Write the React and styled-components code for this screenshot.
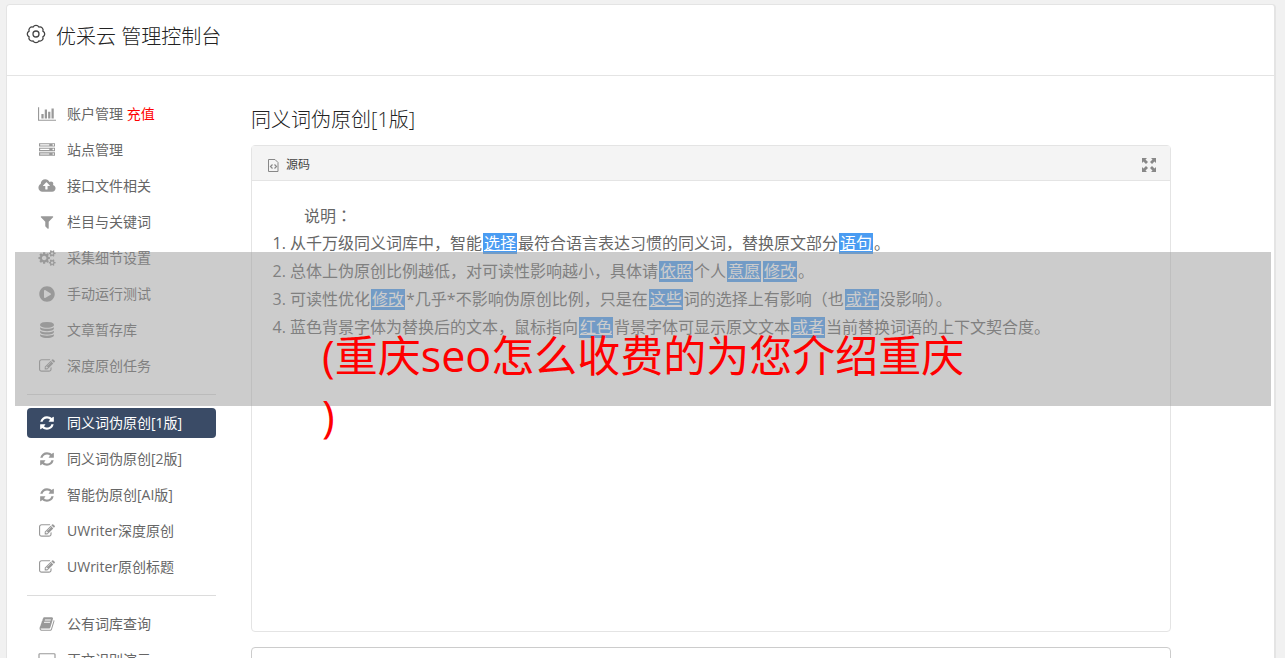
import React from "react";
import { FaPlayCircle } from "react-icons/fa";
import styled, { createGlobalStyle } from "styled-components";

const paths = {
  chart: {
    box: "0 0 2048 1792",
    d: "M640 896v512h-256v-512h256zm384-512v1024h-256v-1024h256zm1024 1152v128h-2048v-1536h128v1408h1920zm-640-896v768h-256v-768h256zm384-384v1152h-256v-1152h256z",
  },
  server: {
    box: "0 0 1792 1792",
    d: "M128 1408h1024v-128h-1024v128zm0-512h1024v-128h-1024v128zm1568 448q0-40-28-68t-68-28-68 28-28 68 28 68 68 28 68-28 28-68zm-1568-960h1024v-128h-1024v128zm1568 448q0-40-28-68t-68-28-68 28-28 68 28 68 68 28 68-28 28-68zm0-512q0-40-28-68t-68-28-68 28-28 68 28 68 68 28 68-28 28-68zm96 832v384h-1792v-384h1792zm0-512v384h-1792v-384h1792zm0-512v384h-1792v-384h1792z",
  },
  upload: {
    box: "0 0 1920 1792",
    d: "M1280 864q0-14-9-23l-352-352q-9-9-23-9t-23 9l-351 351q-10 12-10 24 0 14 9 23t23 9h224v352q0 13 9.5 22.5t22.5 9.5h192q13 0 22.5-9.5t9.5-22.5v-352h224q13 0 22.5-9.5t9.5-22.5zm640 288q0 159-112.5 271.5t-271.5 112.5h-1088q-185 0-316.5-131.5t-131.5-316.5q0-130 70-240t188-165q-2-30-2-43 0-212 150-362t362-150q156 0 285.5 87t188.5 231q71-62 166-62 106 0 181 75t75 181q0 76-41 138 130 31 213.5 135.5t83.5 238.5z",
  },
  filter: {
    box: "0 0 1792 1792",
    d: "M1595 295q17 41-14 70l-493 493v742q0 42-39 59-13 5-25 5-27 0-45-19l-256-256q-19-19-19-45v-486l-493-493q-31-29-14-70 17-39 59-39h1280q42 0 59 39z",
  },
  cogs: {
    box: "0 0 1920 1792",
    d: "M896 896q0-106-75-181t-181-75-181 75-75 181 75 181 181 75 181-75 75-181zm768 512q0-52-38-90t-90-38-90 38-38 90q0 53 37.5 90.5t90.5 37.5 90.5-37.5 37.5-90.5zm0-1024q0-52-38-90t-90-38-90 38-38 90q0 53 37.5 90.5t90.5 37.5 90.5-37.5 37.5-90.5zm-384 421v185q0 10-7 19.5t-16 10.5l-155 24q-11 35-32 76 34 48 90 115 7 11 7 20 0 12-7 19-23 30-82.5 89.5t-78.5 59.5q-11 0-21-7l-115-90q-37 19-77 31-11 108-23 155-7 24-30 24h-186q-11 0-20-7.5t-10-17.5l-23-153q-34-10-75-31l-118 89q-7 7-20 7-11 0-21-8-144-133-144-160 0-9 7-19 10-14 41-53t47-61q-23-44-35-82l-152-24q-10-1-17-9.5t-7-19.5v-185q0-10 7-19.5t16-10.5l155-24q11-35 32-76-34-48-90-115-7-11-7-20 0-12 7-20 22-30 82-89t79-59q11 0 21 7l115 90q34-18 77-32 11-108 23-154 7-24 30-24h186q11 0 20 7.5t10 17.5l23 153q34 10 75 31l118-89q8-7 20-7 11 0 21 8 144 133 144 160 0 8-7 19-12 16-42 54t-45 60q23 48 34 82l152 23q10 2 17 10.5t7 19.5zm640 533v140q0 16-149 31-12 27-30 52 51 113 51 138 0 4-4 7-122 71-124 71-8 0-46-47t-52-68q-20 2-30 2t-30-2q-14 21-52 68t-46 47q-2 0-124-71-4-3-4-7 0-25 51-138-18-25-30-52-149-15-149-31v-140q0-16 149-31 13-29 30-52-51-113-51-138 0-4 4-7 4-2 35-20t59-34 30-16q8 0 46 46.5t52 67.5q20-2 30-2t30 2q51-71 92-112l6-2q4 0 124 70 4 3 4 7 0 25-51 138 17 23 30 52 149 15 149 31zm0-1024v140q0 16-149 31-12 27-30 52 51 113 51 138 0 4-4 7-122 71-124 71-8 0-46-47t-52-68q-20 2-30 2t-30-2q-14 21-52 68t-46 47q-2 0-124-71-4-3-4-7 0-25 51-138-18-25-30-52-149-15-149-31v-140q0-16 149-31 13-29 30-52-51-113-51-138 0-4 4-7 4-2 35-20t59-34 30-16q8 0 46 46.5t52 67.5q20-2 30-2t30 2q51-71 92-112l6-2q4 0 124 70 4 3 4 7 0 25-51 138 17 23 30 52 149 15 149 31z",
  },
  database: {
    box: "0 0 1792 1792",
    d: "M896 768q237 0 443-43t325-127v170q0 69-103 128t-280 93.5-385 34.5-385-34.5-280-93.5-103-128v-170q119 84 325 127t443 43zm0 768q237 0 443-43t325-127v170q0 69-103 128t-280 93.5-385 34.5-385-34.5-280-93.5-103-128v-170q119 84 325 127t443 43zm0-384q237 0 443-43t325-127v170q0 69-103 128t-280 93.5-385 34.5-385-34.5-280-93.5-103-128v-170q119 84 325 127t443 43zm0-1152q208 0 385 34.5t280 93.5 103 128v128q0 69-103 128t-280 93.5-385 34.5-385-34.5-280-93.5-103-128v-128q0-69 103-128t280-93.5 385-34.5z",
  },
  edit: {
    box: "0 0 1792 1792",
    d: "M888 1184l116-116-152-152-116 116v56h96v96h56zm440-720q-16-16-33 1l-350 350q-17 17-1 33t33-1l350-350q17-17 1-33zm80 594v190q0 119-84.5 203.5t-203.5 84.5h-832q-119 0-203.5-84.5t-84.5-203.5v-832q0-119 84.5-203.5t203.5-84.5h832q63 0 117 25 15 7 18 23 3 17-9 29l-49 49q-14 14-32 8-23-6-45-6h-832q-66 0-113 47t-47 113v832q0 66 47 113t113 47h832q66 0 113-47t47-113v-126q0-13 9-22l64-64q15-15 35-7t20 29zm-96-738l288 288-672 672h-288v-288zm444 132l-92 92-288-288 92-92q28-28 68-28t68 28l152 152q28 28 28 68t-28 68z",
  },
  refresh: {
    box: "0 0 1792 1792",
    d: "M1639 1056q0 5-1 7-64 268-268 434.5t-478 166.5q-146 0-282.5-55t-243.5-157l-129 129q-19 19-45 19t-45-19-19-45v-448q0-26 19-45t45-19h448q26 0 45 19t19 45-19 45l-137 137q71 66 161 102t187 36q134 0 250-65t186-179q11-17 53-117 8-23 30-23h192q13 0 22.5 9.5t9.5 22.5zm25-800v448q0 26-19 45t-45 19h-448q-26 0-45-19t-19-45 19-45l138-138q-148-137-349-137-134 0-250 65t-186 179q-11 17-53 117-8 23-30 23h-199q-13 0-22.5-9.5t-9.5-22.5v-7q65-268 270-434.5t480-166.5q146 0 284 55.5t245 156.5l130-129q19-19 45-19t45 19 19 45z",
  },
  book: {
    box: "0 0 1792 1792",
    d: "M1703 478q40 57 18 129l-275 906q-19 64-76.5 107.5t-122.5 43.5h-923q-77 0-148.5-53.5t-99.5-131.5q-24-67-2-127 0-4 3-27t4-37q1-8-3-21.5t-3-19.5q2-11 8-21t16.5-23.5 16.5-23.5q23-38 45-91.5t30-91.5q3-10 .5-30t-.5-28q3-11 17-28t17-23q21-36 42-92t25-90q1-9-2.5-32t.5-28q4-13 22-30.5t22-22.5q19-26 42.5-84.5t27.5-96.5q1-8-3-25.5t-2-26.5q2-8 9-18t18-23 17-21q8-12 16.5-30.5t15-35 16-36 19.5-32 26.5-23.5 36-11.5 47.5 5.5l-1 3q38-9 51-9h761q74 0 114 56t18 130l-274 906q-36 119-71.5 153.5t-128.5 34.5h-869q-27 0-38 15-11 16-1 43 24 70 144 70h923q29 0 56-15.5t35-41.5l300-987q7-22 5-57 38 15 59 43zm-1064 2q-4 13 2 22.5t20 9.5h608q13 0 25.5-9.5t16.5-22.5l21-64q4-13-2-22.5t-20-9.5h-608q-13 0-25.5 9.5t-16.5 22.5zm-83 256q-4 13 2 22.5t20 9.5h608q13 0 25.5-9.5t16.5-22.5l21-64q4-13-2-22.5t-20-9.5h-608q-13 0-25.5 9.5t-16.5 22.5z",
  },
  screen: {
    box: "0 0 1920 1792",
    d: "M160 128h1600q66 0 113 47t47 113v1088q0 66-47 113t-113 47h-1600q-66 0-113-47t-47-113v-1088q0-66 47-113t113-47zm0 128q-32 0-32 32v928q0 32 32 32h1600q32 0 32-32v-928q0-32-32-32z",
  },
};

const Glyph = ({ name }) => (
  <svg viewBox={paths[name].box} aria-hidden="true">
    <path d={paths[name].d} fillRule="evenodd" />
  </svg>
);

const menu = [
  [
    { icon: "chart", label: "账户管理", extra: "充值" },
    { icon: "server", label: "站点管理" },
    { icon: "upload", label: "接口文件相关" },
    { icon: "filter", label: "栏目与关键词" },
    { icon: "cogs", label: "采集细节设置" },
    { icon: "play", label: "手动运行测试" },
    { icon: "database", label: "文章暂存库" },
    { icon: "edit", label: "深度原创任务" },
  ],
  [
    { icon: "refresh", label: "同义词伪原创[1版]", active: true },
    { icon: "refresh", label: "同义词伪原创[2版]" },
    { icon: "refresh", label: "智能伪原创[AI版]" },
    { icon: "edit", label: "UWriter深度原创" },
    { icon: "edit", label: "UWriter原创标题" },
  ],
  [
    { icon: "book", label: "公有词库查询" },
    { icon: "screen", label: "正文识别演示" },
  ],
];

const Sidebar = () => (
  <Nav>
    {menu.map((group, index) => (
      <Group key={index}>
        {group.map((item) => (
          <li key={item.label}>
            <MenuLink href="#" $active={item.active}>
              <MenuIcon $wide={["chart", "upload", "cogs", "screen"].includes(item.icon)}>
                {item.icon === "play" ? <FaPlayCircle /> : <Glyph name={item.icon} />}
              </MenuIcon>
              <span>
                {item.label} {item.extra && <Recharge>{item.extra}</Recharge>}
              </span>
            </MenuLink>
          </li>
        ))}
      </Group>
    ))}
  </Nav>
);

const Editor = () => (
  <EditorBox>
    <Toolbar>
      <ToolButton type="button">
        <svg width="14" height="16" viewBox="0 0 14 16" aria-hidden="true">
          <path d="M2.500 2.500h6.500l3 3v9H2.500z" fill="none" stroke="#888" />
          <path d="M6.500 7.500l-2 2 2 2M8.500 7.500l2 2-2 2" fill="none" stroke="#888" strokeWidth="1.200" />
        </svg>
        源码
      </ToolButton>
      <ToolButton type="button" aria-label="全屏">
        <svg width="16" height="16" viewBox="0 0 16 16" fill="#888" aria-hidden="true">
          <path d="M1 1h5L4.500 2.500l2.500 2.500-2 2-2.500-2.500L1 6zM15 1v5l-1.500-1.500L11 7 9 5l2.500-2.500L10 1zM1 15v-5l1.500 1.500L5 9l2 2-2.500 2.500L6 15zM15 15h-5l1.500-1.500L9 11l2-2 2.500 2.500L15 10z" />
        </svg>
      </ToolButton>
    </Toolbar>
    <Content>
      <Intro>说明：</Intro>
      <Notes>
        <li>
          从千万级同义词库中，智能<Word>选择</Word>最符合语言表达习惯的同义词，替换原文部分
          <Word>语句</Word>。
        </li>
        <li>
          总体上伪原创比例越低，对可读性影响越小，具体请<Word>依照</Word>个人
          <Word>意愿</Word>
          <Word>修改</Word>。
        </li>
        <li>
          可读性优化<Word>修改</Word>*几乎*不影响伪原创比例，只是在<Word>这些</Word>
          词的选择上有影响（也<Word>或许</Word>没影响）。
        </li>
        <li>
          蓝色背景字体为替换后的文本，鼠标指向<Word>红色</Word>背景字体可显示原文文本
          <Word>或者</Word>当前替换词语的上下文契合度。
        </li>
      </Notes>
    </Content>
  </EditorBox>
);

export default function App() {
  return (
    <>
      <GlobalStyle />
      <Page>
        <Header>
          <svg width="20" height="20" viewBox="0 0 20 20" fill="none" stroke="#444" strokeWidth="1.300" aria-hidden="true">
            <path d="M16.930 12.870A3.200 3.200 0 0 1 12.870 16.930A3.200 3.200 0 0 1 7.130 16.930A3.200 3.200 0 0 1 3.070 12.870A3.200 3.200 0 0 1 3.070 7.130A3.200 3.200 0 0 1 7.130 3.070A3.200 3.200 0 0 1 12.870 3.070A3.200 3.200 0 0 1 16.930 7.130A3.200 3.200 0 0 1 16.930 12.870z" />
            <circle cx="10" cy="10" r="3" />
          </svg>
          <h1>优采云 管理控制台</h1>
        </Header>
        <Body>
          <Sidebar />
          <Main>
            <h2>同义词伪原创[1版]</h2>
            <Editor />
            <Source aria-label="原文" />
          </Main>
        </Body>
      </Page>
      <Banner>
        <p>(重庆seo怎么收费的为您介绍重庆)</p>
      </Banner>
    </>
  );
}

const GlobalStyle = createGlobalStyle`
  * {
    box-sizing: border-box;
  }
  html {
    overflow: hidden;
  }
  body {
    margin: 0;
    background: #f1f1f1;
    color: #666;
    font-family: "Open Sans", "Noto Sans CJK SC", sans-serif;
  }
  h1, h2, p, ul, ol {
    margin: 0;
    padding: 0;
    font-weight: inherit;
  }
`;

const Page = styled.div`
  margin: 4px 9px 0 6px;
  background: #fff;
  border: 1px solid #e4e4e4;
  border-right-width: 2px;
  border-radius: 4px;
`;

const Header = styled.header`
  display: flex;
  align-items: flex-start;
  gap: 10px;
  height: 71px;
  padding: 19px;
  color: #222;
  border-bottom: 1px solid #e4e4e4;
  h1 {
    font-size: 20px;
    font-weight: 300;
    line-height: 26px;
  }
`;

const Body = styled.div`
  display: flex;
  gap: 35px;
  padding: 20px 103px 0 20px;
`;

const Nav = styled.nav`
  width: 189px;
  flex-shrink: 0;
`;

const Group = styled.ul`
  display: flex;
  flex-direction: column;
  gap: 6px;
  list-style: none;
  & + & {
    margin-top: 13px;
    padding-top: 13px;
    border-top: 1px solid #dcdcdc;
  }
  &:first-child {
    padding-top: 3px;
  }
`;

const MenuLink = styled.a`
  display: flex;
  align-items: center;
  gap: 10px;
  height: 30px;
  padding: 0 10px;
  border-radius: 4px;
  font-size: 14px;
  line-height: 20px;
  white-space: nowrap;
  text-decoration: none;
  color: ${(props) => (props.$active ? "#fff" : "#666")};
  background: ${(props) => (props.$active ? "#3a4b66" : "transparent")};
  svg {
    fill: ${(props) => (props.$active ? "#fff" : "#999")};
    color: #999;
  }
`;

const MenuIcon = styled.span`
  display: flex;
  justify-content: center;
  width: 20px;
  svg {
    width: ${(props) => (props.$wide ? "18px" : "16px")};
    height: 16px;
  }
`;

const Recharge = styled.span`
  color: #f00;
`;

const Main = styled.main`
  flex: 1;
  min-width: 0;
  h2 {
    padding: 11px 0 13px;
    color: #222;
    font-size: 20px;
    font-weight: 300;
    line-height: 25px;
  }
`;

const EditorBox = styled.section`
  min-height: 487px;
  border: 1px solid #e4e4e4;
  border-radius: 4px;
`;

const Toolbar = styled.div`
  display: flex;
  justify-content: space-between;
  align-items: center;
  height: 35px;
  padding: 3px 13px 0 14px;
  background: #f4f4f4;
  border-bottom: 1px solid #e4e4e4;
`;

const ToolButton = styled.button`
  display: flex;
  align-items: center;
  gap: 6px;
  padding: 0;
  border: 0;
  background: none;
  color: #444;
  font: inherit;
  font-size: 12px;
  line-height: 16px;
`;

const Content = styled.div`
  padding: 20px;
  font-size: 16px;
  line-height: 28px;
`;

const Intro = styled.p`
  font-family: "Noto Sans CJK JP", sans-serif;
  text-indent: 2em;
`;

const Notes = styled.ol`
  padding-left: 18px;
`;

const Word = styled.u`
  display: inline-block;
  height: 21px;
  margin: 0 1px;
  padding: 0 1px;
  line-height: 21px;
  color: #fff;
  background: #4a9cf2;
`;

const Source = styled.textarea`
  display: block;
  width: 100%;
  height: 120px;
  margin-top: 15px;
  border: 1px solid #ccc;
  border-radius: 4px;
  resize: none;
`;

// translucent strip laid over the page
const Banner = styled.div`
  position: absolute;
  top: 252px;
  left: 15px;
  right: 14px;
  height: 154px;
  padding: 74px 300px 0 307px;
  background: rgba(153, 153, 153, 0.5);
  color: #f00;
  font-size: 43px;
  line-height: 60px;
  line-break: anywhere;
`;
